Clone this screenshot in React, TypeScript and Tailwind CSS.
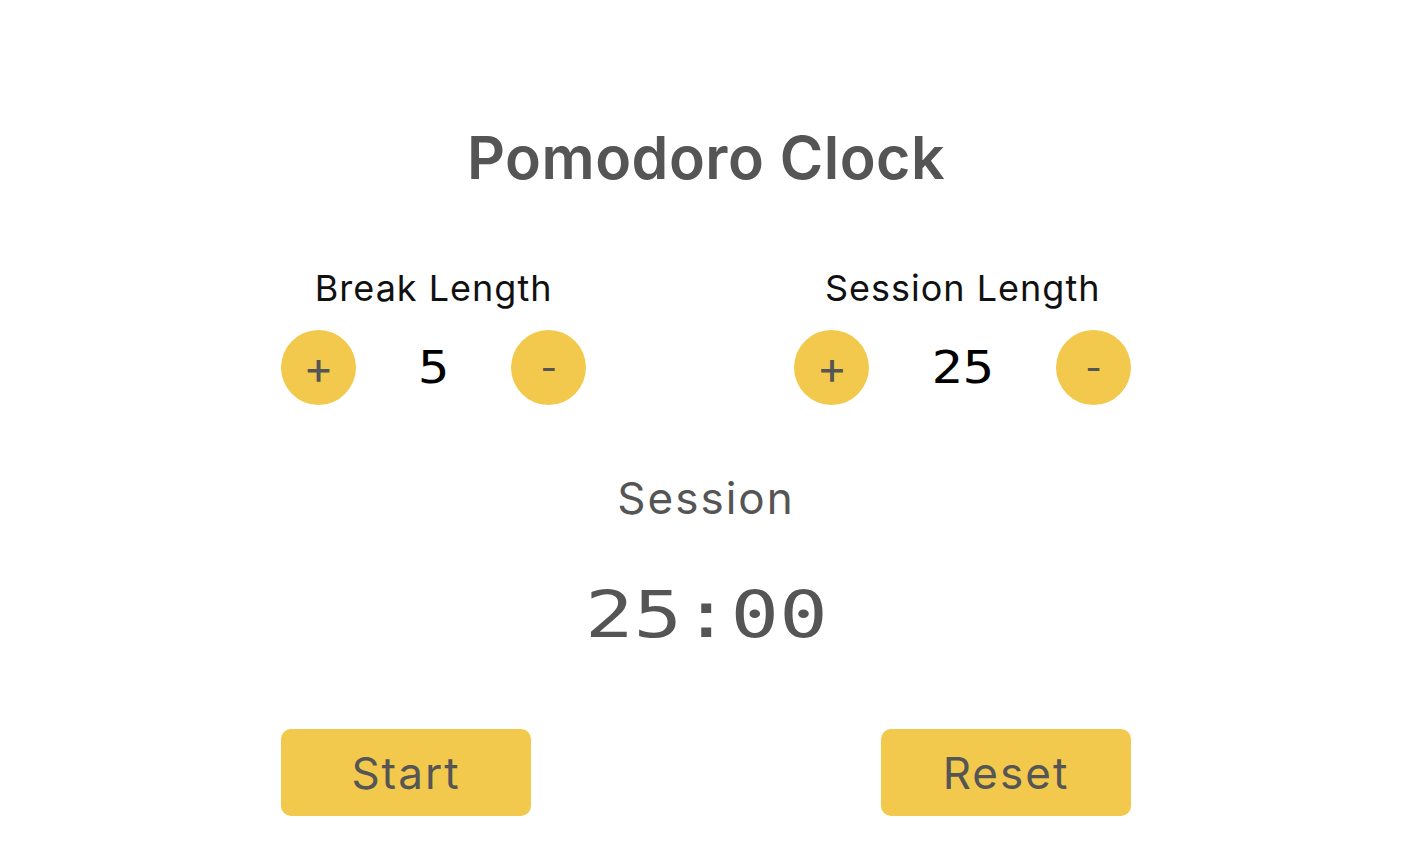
import { useState } from 'react';

const sans = "font-['Inter','Open_Sans',sans-serif]";
const digits = "font-['DejaVu_Sans_Mono','Liberation_Mono',monospace]";

function Stepper({ label, value, onUp, onDown }: { label: string; value: number; onUp: () => void; onDown: () => void }) {
  return (
    <div className="flex flex-col items-center">
      <h2 className={`${sans} text-[36px] leading-none text-[#111] tracking-[1px]`}>{label}</h2>
      <div className="flex items-center mt-[24px]">
        <button
          onClick={onUp}
          className={`${sans} w-[75px] h-[75px] rounded-full bg-[#f2c94c] text-[#555] text-[46px] leading-none flex items-center justify-center pb-[2px]`}
        >
          +
        </button>
        <span className={`${digits} mx-[62px] text-[52px] leading-none text-black scale-y-[0.85] inline-block`}>{value}</span>
        <button
          onClick={onDown}
          className={`${sans} w-[75px] h-[75px] rounded-full bg-[#f2c94c] text-[#555] text-[36px] leading-none flex items-center justify-center`}
        >
          -
        </button>
      </div>
    </div>
  );
}

export default function App() {
  const [brk, setBrk] = useState(5);
  const [session, setSession] = useState(25);

  return (
    <div className="min-h-[867px] bg-white flex justify-center">
      <div className="w-[850px] flex flex-col items-center">
        <h1 className={`${sans} mt-[128px] text-[59px] font-semibold leading-none text-[#555] tracking-[0.5px]`}>
          Pomodoro Clock
        </h1>

        {/* Length controls */}
        <div className="w-full flex justify-between mt-[83px]">
          <Stepper label="Break Length" value={brk} onUp={() => setBrk(brk + 1)} onDown={() => setBrk(Math.max(1, brk - 1))} />
          <Stepper label="Session Length" value={session} onUp={() => setSession(session + 1)} onDown={() => setSession(Math.max(1, session - 1))} />
        </div>

        <div className={`${sans} mt-[71px] text-[44px] leading-none text-[#555] tracking-[2px]`}>Session</div>
        <div className={`${digits} mt-[63px] text-[64px] leading-none text-[#555] inline-block scale-x-[1.26]`}>
          {String(session).padStart(2, '0')}:00
        </div>

        <div className="w-full flex justify-between mt-[82px]">
          <button className={`${sans} w-[250px] h-[87px] rounded-[10px] bg-[#f2c94c] text-[44px] text-[#555] tracking-[2px]`}>
            Start
          </button>
          <button className={`${sans} w-[250px] h-[87px] rounded-[10px] bg-[#f2c94c] text-[44px] text-[#555] tracking-[2px]`}>
            Reset
          </button>
        </div>
      </div>
    </div>
  );
}
